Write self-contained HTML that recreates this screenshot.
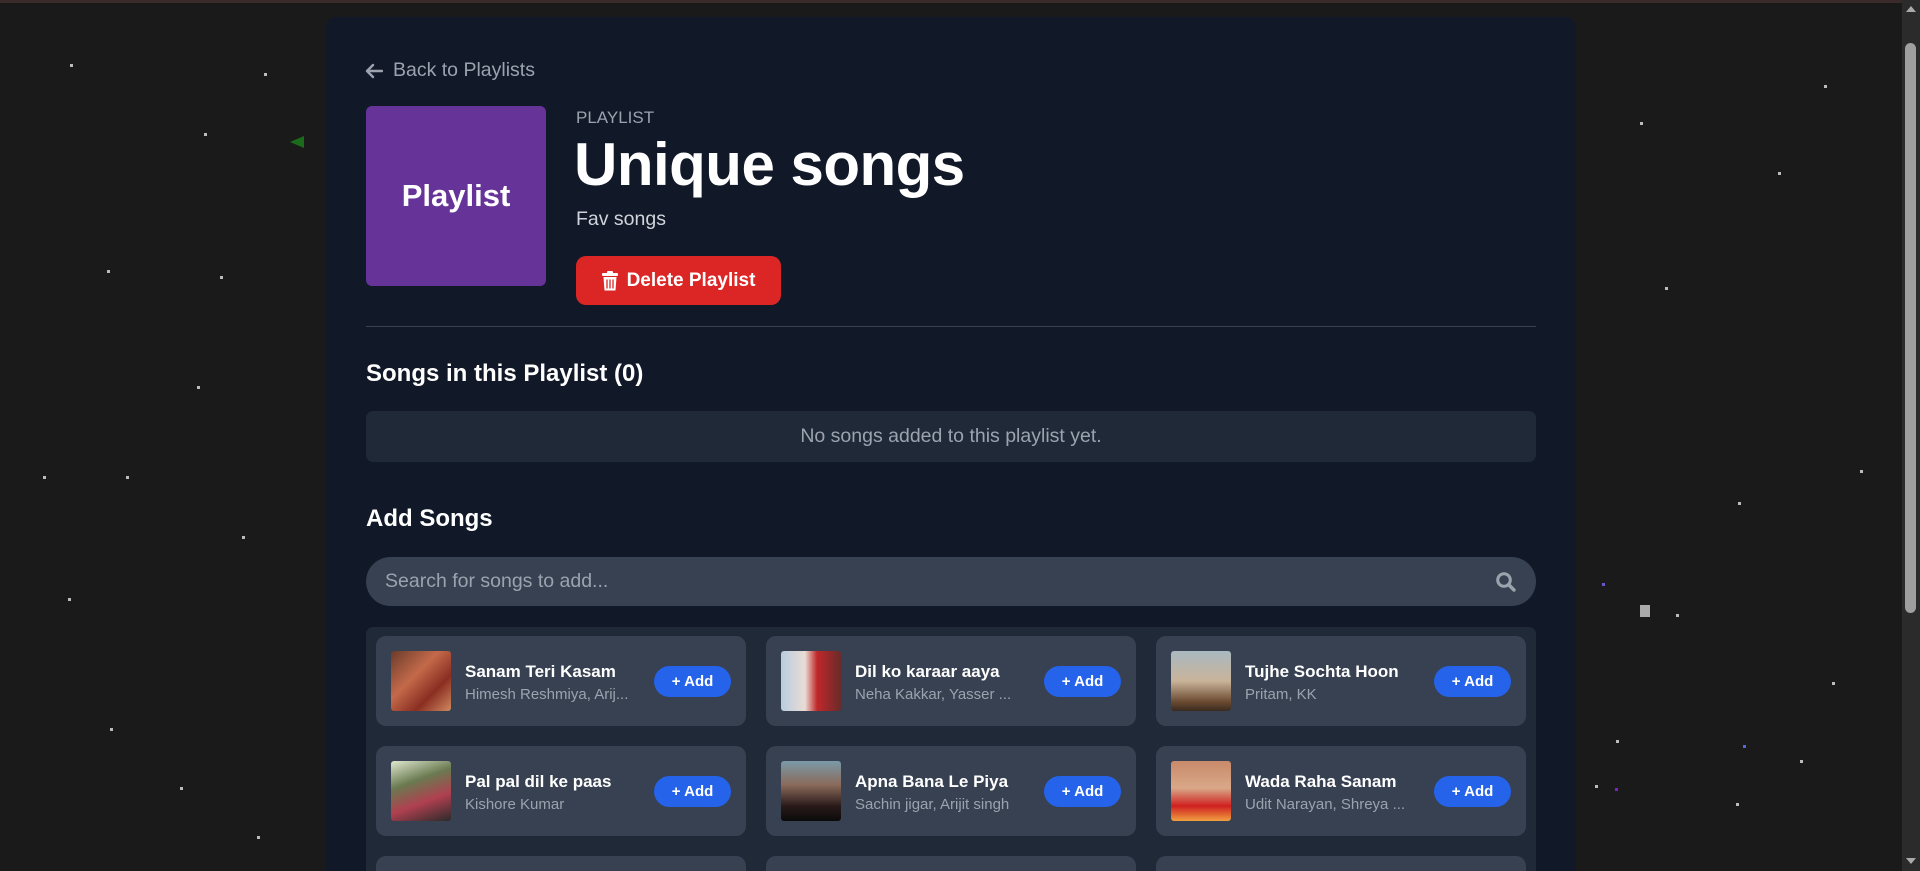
<!DOCTYPE html>
<html><head><meta charset="utf-8">
<style>
*{box-sizing:border-box;margin:0;padding:0}
html,body{width:1920px;height:871px;overflow:hidden;background:#1a1a1a;font-family:"Liberation Sans",sans-serif;color:#fff}
#root{position:relative;width:1920px;height:871px;overflow:hidden}
.topline{position:absolute;left:0;top:0;width:1920px;height:3px;background:#3b2a2a}
.star{position:absolute;width:3px;height:3px;background:#bbb}
.panel{position:absolute;left:326px;top:17px;width:1250px;height:854px;background:#111827;border-radius:10px 10px 0 0}
.abs{position:absolute}
.back{left:365px;top:59px;font-size:19.5px;color:#9ca3af;display:flex;align-items:center;gap:10px}
.cover{left:366px;top:106px;width:180px;height:180px;background:#663399;border-radius:6px;display:flex;align-items:center;justify-content:center;font-size:31px;font-weight:bold}
.lbl{left:576px;top:108px;font-size:17px;color:#9ca3af}
.title{left:574px;top:130px;font-size:60px;font-weight:bold;letter-spacing:-0.5px}
.desc{left:576px;top:208px;font-size:19.5px;color:#d1d5db}
.del{left:576px;top:256px;width:205px;height:49px;background:#dc2626;border-radius:10px;display:flex;align-items:center;justify-content:center;gap:9px;font-size:19px;font-weight:bold}
.hr{left:366px;top:326px;width:1170px;height:1px;background:#374151}
.h2{left:366px;top:360px;font-size:24px;font-weight:bold}
.empty{left:366px;top:411px;width:1170px;height:51px;background:#1f2937;border-radius:7px;display:flex;align-items:center;justify-content:center;font-size:19.5px;color:#9ca3af}
.search{left:366px;top:557px;width:1170px;height:49px;background:#374151;border-radius:25px;padding-left:19px;display:flex;align-items:center;font-size:19.5px;color:#9ca3af}
.grid{left:366px;top:627px;width:1170px;height:244px;background:#1f2937;border-radius:7px 7px 0 0;overflow:hidden}
.card{position:absolute;width:370px;height:90px;background:#374151;border-radius:10px}
.thumb{position:absolute;left:15px;top:15px;width:60px;height:60px;border-radius:3px}
.t{position:absolute;left:89px;top:26px;font-size:17px;font-weight:bold;white-space:nowrap}
.a{position:absolute;left:89px;top:50px;font-size:15px;color:#9ca3af;white-space:nowrap}
.add{position:absolute;left:278px;top:30px;width:77px;height:31px;background:#2563eb;border-radius:16px;display:flex;align-items:center;justify-content:center;font-size:15px;font-weight:bold}
.sb{position:absolute;left:1902px;top:0;width:18px;height:871px;background:#2b2b2b}
.sbt{position:absolute;left:1905px;top:43px;width:11px;height:570px;background:#9f9f9f;border-radius:6px}
</style></head><body><div id="root">
<div class="topline"></div>
<div class="star" style="left:70px;top:64px"></div><div class="star" style="left:264px;top:73px"></div><div class="star" style="left:204px;top:133px"></div><div class="star" style="left:107px;top:270px"></div><div class="star" style="left:220px;top:276px"></div><div class="star" style="left:197px;top:386px"></div><div class="star" style="left:126px;top:476px"></div><div class="star" style="left:43px;top:476px"></div><div class="star" style="left:242px;top:536px"></div><div class="star" style="left:68px;top:598px"></div><div class="star" style="left:180px;top:787px"></div><div class="star" style="left:257px;top:836px"></div><div class="star" style="left:110px;top:728px"></div>
<div style="position:absolute;left:290px;top:136px;width:0;height:0;border-top:6px solid transparent;border-bottom:6px solid transparent;border-right:14px solid #1a6b1a"></div>
<div class="star" style="left:1640px;top:122px"></div><div class="star" style="left:1824px;top:85px"></div><div class="star" style="left:1778px;top:172px"></div><div class="star" style="left:1665px;top:287px"></div><div class="star" style="left:1738px;top:502px"></div><div class="star" style="left:1676px;top:614px"></div><div class="star" style="left:1616px;top:740px"></div><div class="star" style="left:1800px;top:760px"></div><div class="star" style="left:1736px;top:803px"></div><div class="star" style="left:1595px;top:785px"></div><div class="star" style="left:1832px;top:682px"></div><div class="star" style="left:1860px;top:470px"></div>
<div style="position:absolute;left:1640px;top:605px;width:10px;height:12px;background:#aaa"></div>
<div class="star" style="left:1602px;top:583px;background:#6655cc"></div><div class="star" style="left:1743px;top:745px;background:#5566dd"></div><div class="star" style="left:1615px;top:788px;background:#7722cc"></div>
<div class="panel"></div>
<div class="abs back"><svg width="18" height="16" viewBox="0 0 18 16"><path d="M8 2L2 8l6 6M2 8h15" stroke="#9ca3af" stroke-width="2.4" fill="none" stroke-linecap="round" stroke-linejoin="round"/></svg>Back to Playlists</div>
<div class="abs cover">Playlist</div>
<div class="abs lbl">PLAYLIST</div>
<div class="abs title">Unique songs</div>
<div class="abs desc">Fav songs</div>
<div class="abs del"><svg width="16" height="20" viewBox="0 0 16 20"><rect x="0" y="2" width="16" height="3" rx="1" fill="#fff"/><rect x="5" y="0" width="6" height="3" rx="1" fill="#fff"/><path d="M1.5 6h13l-1 13.5h-11z" fill="#fff"/><path d="M5 8.5v9M8 8.5v9M11 8.5v9" stroke="#dc2626" stroke-width="1.3"/></svg>Delete Playlist</div>
<div class="abs hr"></div>
<div class="abs h2">Songs in this Playlist (0)</div>
<div class="abs empty">No songs added to this playlist yet.</div>
<div class="abs h2" style="top:505px">Add Songs</div>
<div class="abs search">Search for songs to add...<svg style="position:absolute;left:1129px;top:14px" width="22" height="22" viewBox="0 0 22 22"><circle cx="9" cy="9" r="6.3" stroke="#9ca3af" stroke-width="3" fill="none"/><path d="M13.5 13.5l5.5 5.5" stroke="#9ca3af" stroke-width="3.4" stroke-linecap="round"/></svg></div>
<div class="abs grid">
 <div class="card" style="left:10px;top:9px"><div class="thumb" style="background:linear-gradient(135deg,#6b3b2a,#c46a4a 40%,#8a2e22 70%,#d08a60)"></div><div class="t">Sanam Teri Kasam</div><div class="a">Himesh Reshmiya, Arij...</div><div class="add">+ Add</div></div>
 <div class="card" style="left:400px;top:9px"><div class="thumb" style="background:linear-gradient(90deg,#b8cde0,#e9dcd5 40%,#c0282a 60%,#6a2a2a)"></div><div class="t">Dil ko karaar aaya</div><div class="a">Neha Kakkar, Yasser ...</div><div class="add">+ Add</div></div>
 <div class="card" style="left:790px;top:9px"><div class="thumb" style="background:linear-gradient(180deg,#a9b8c0,#c9b49a 50%,#6a4a30 85%,#3a2a20)"></div><div class="t">Tujhe Sochta Hoon</div><div class="a">Pritam, KK</div><div class="add">+ Add</div></div>
 <div class="card" style="left:10px;top:119px"><div class="thumb" style="background:linear-gradient(160deg,#e0e8d0,#6a7a50 35%,#b04050 65%,#2a2a2a)"></div><div class="t">Pal pal dil ke paas</div><div class="a">Kishore Kumar</div><div class="add">+ Add</div></div>
 <div class="card" style="left:400px;top:119px"><div class="thumb" style="background:linear-gradient(180deg,#7a9aa8,#8a6a5a 40%,#2a1a1a 75%,#0a0a0a)"></div><div class="t">Apna Bana Le Piya</div><div class="a">Sachin jigar, Arijit singh</div><div class="add">+ Add</div></div>
 <div class="card" style="left:790px;top:119px"><div class="thumb" style="background:linear-gradient(180deg,#c88a6a,#d8a888 45%,#d02020 75%,#f0a040)"></div><div class="t">Wada Raha Sanam</div><div class="a">Udit Narayan, Shreya ...</div><div class="add">+ Add</div></div>
 <div class="card" style="left:10px;top:229px"></div><div class="card" style="left:400px;top:229px"></div><div class="card" style="left:790px;top:229px"></div>
</div>
<div class="sb"></div><div class="sbt"></div>
<div style="position:absolute;left:1906px;top:6px;border-left:5px solid transparent;border-right:5px solid transparent;border-bottom:6px solid #aaa"></div>
<div style="position:absolute;left:1906px;top:858px;border-left:5px solid transparent;border-right:5px solid transparent;border-top:6px solid #aaa"></div>
</div></body></html>
